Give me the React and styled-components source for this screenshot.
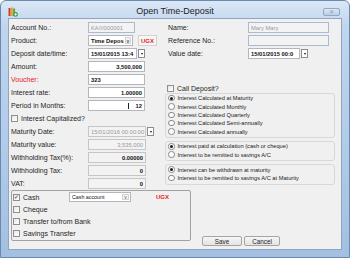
import React from "react";
import styled, { createGlobalStyle } from "styled-components";

const GlobalStyle = createGlobalStyle`
  html, body { margin: 0; padding: 0; background: #ffffff; }
  body { font-family: "Liberation Sans", Arial, sans-serif; }
  * { box-sizing: border-box; }
`;

const Window = styled.div`
  width: 350px;
  height: 258px;
  display: flex;
  flex-direction: column;
  padding: 0 7px 7px 7px;
  border: 1px solid #6a89af;
  border-radius: 6px 6px 0 0;
  background: linear-gradient(180deg, #dae7f6 0%, #c0d5ee 10%, #b2cbe9 55%, #a3bfe1 100%);
`;

const TitleBar = styled.div`
  height: 17px;
  display: grid;
  grid-template-columns: 1fr auto 1fr;
  align-items: end;
  padding-bottom: 1px;
`;

const Title = styled.div`
  font-size: 9px;
  line-height: 11px;
  color: #1c1c1c;
`;

const CloseButton = styled.div`
  justify-self: end;
  width: 17px;
  height: 8px;
  margin-right: 2px;
  margin-bottom: 1px;
  border: 1px solid #8fa8c6;
  border-radius: 2px;
  background: linear-gradient(180deg, #dbe6f2, #bccfe4);
  color: #8a9db5;
  font-size: 6px;
  line-height: 6px;
  text-align: center;
`;

const Client = styled.div`
  flex: 1;
  display: flex;
  flex-direction: column;
  background: #f0f0f0;
  border: 1px solid #8fa5c0;
  padding: 2px 6px 3px 2px;
`;

const TopSection = styled.div`
  display: grid;
  grid-template-columns: 154px 1fr;
  height: 169px;
`;

const Column = styled.div`
  display: flex;
  flex-direction: column;
`;

const FieldRow = styled.div`
  display: grid;
  grid-template-columns: ${(p) => p.$labelWidth}px auto;
  align-items: center;
  height: 13px;
  padding-left: ${(p) => p.$indent || 0}px;
`;

const Label = styled.span`
  font-size: 7px;
  color: ${(p) => (p.$red ? "#e8201f" : "#1e1e1e")};
  white-space: nowrap;
`;

const Inline = styled.div`
  display: flex;
  align-items: center;
  gap: ${(p) => p.$gap || 0}px;
`;

const TextBox = styled.div`
  width: ${(p) => p.$w}px;
  height: 11px;
  display: flex;
  align-items: center;
  justify-content: ${(p) => (p.$right ? "flex-end" : "flex-start")};
  padding: 0 2px;
  border: 1px solid ${(p) => (p.$blue ? "#a9bccf" : p.$disabled ? "#c6c6c6" : "#b4b6bb")};
  background: ${(p) => (p.$disabled ? "#f3f3f3" : "#ffffff")};
  color: ${(p) => (p.$muted ? "#9a9a9a" : "#111111")};
  font-size: 5.8px;
  font-weight: ${(p) => (p.$muted ? "normal" : "bold")};
  white-space: nowrap;
  overflow: hidden;
`;

const Caret = styled.span`
  width: 1px;
  height: 6px;
  background: #222;
  margin-right: 7px;
`;

const DropButton = styled.div`
  width: 7px;
  height: 9px;
  border: 1px solid #8c8c8c;
  background: #ffffff;
  display: flex;
  align-items: center;
  justify-content: center;
  &::after {
    content: "";
    border-left: 1.5px solid transparent;
    border-right: 1.5px solid transparent;
    border-top: 2px solid #111;
  }
`;

const SelectBox = styled.div`
  width: ${(p) => p.$w}px;
  height: ${(p) => p.$h || 11}px;
  display: flex;
  align-items: center;
  border: 1px solid #b4b6bb;
  background: #ffffff;
  font-size: ${(p) => (p.$small ? 5.3 : 5.8)}px;
  font-weight: ${(p) => (p.$small ? "normal" : "bold")};
  color: #111;
  padding-left: 2px;
  white-space: nowrap;
`;

const SelectText = styled.span`
  flex: 1;
`;

const SelectArrow = styled.span`
  width: 7px;
  align-self: stretch;
  margin: 1px;
  border: 1px solid #d4d4d4;
  background: #f4f4f4;
  font-size: 5px;
  color: #555;
  display: flex;
  align-items: center;
  justify-content: center;
`;

const CurrencyTag = styled.div`
  height: 11px;
  padding: 0 2px;
  display: flex;
  align-items: center;
  border: ${(p) => (p.$boxed ? "1px solid #d2d2d2" : "none")};
  background: ${(p) => (p.$boxed ? "#f6f6f6" : "transparent")};
  color: #e51c1c;
  font-size: 6px;
  font-weight: bold;
`;

const CheckRow = styled.label`
  display: flex;
  align-items: center;
  gap: ${(p) => p.$gap || 3}px;
  height: ${(p) => p.$h}px;
  padding-left: ${(p) => p.$indent || 0}px;
  font-size: 7px;
  color: #1e1e1e;
  white-space: nowrap;
`;

const CheckBox = styled.span`
  width: 7px;
  height: 7px;
  border: 1px solid #8e8f8f;
  background: linear-gradient(135deg, #e6e6e6, #ffffff);
  display: flex;
  align-items: center;
  justify-content: center;
  font-size: 6px;
  line-height: 6px;
  color: #333;
`;

const OptionGroup = styled.div`
  display: flex;
  flex-direction: column;
  border: 1px solid #d8d8d8;
  border-radius: 3px;
  padding: 0 0 1.5px 2px;
  margin-top: ${(p) => p.$top || 0}px;
`;

const RadioRow = styled.div`
  display: flex;
  align-items: center;
  gap: 3px;
  height: 8.35px;
  font-size: 5.7px;
  color: #222;
  white-space: nowrap;
`;

const Radio = styled.span`
  width: 6.5px;
  height: 6.5px;
  border-radius: 50%;
  border: 1px solid #8a8a8a;
  background: #fdfdfd;
  display: flex;
  align-items: center;
  justify-content: center;
  &::after {
    content: "";
    width: 3px;
    height: 3px;
    border-radius: 50%;
    background: ${(p) => (p.$on ? "#1a1a1a" : "transparent")};
  }
`;

const BottomSection = styled.div`
  flex: 1;
  display: flex;
  align-items: flex-end;
`;

const PaymentGroup = styled.div`
  width: 180px;
  height: 51px;
  margin-bottom: 5px;
  border: 1px solid #a2a2a2;
  border-radius: 2px;
  padding-left: 1px;
  display: flex;
  flex-direction: column;
`;

const PaymentRow = styled.div`
  display: flex;
  align-items: center;
  height: 12px;
`;

const ButtonBar = styled.div`
  display: flex;
  gap: 2px;
  margin-left: 11px;
`;

const Button = styled.button`
  width: ${(p) => p.$w}px;
  height: 10px;
  padding: 0;
  border: 1px solid #a5a5a5;
  border-radius: 2px;
  background: linear-gradient(180deg, #f6f6f6, #e3e3e3);
  font-family: inherit;
  font-size: 6.3px;
  color: #1e1e1e;
`;

function AppIcon() {
  return (
    <svg width="10" height="10" viewBox="0 0 10 10" style={{ alignSelf: "end" }}>
      <rect x="0.5" y="1" width="2" height="8" fill="#c9412b" />
      <rect x="2.8" y="0.5" width="2" height="8.5" fill="#e0a23a" />
      <rect x="5.1" y="1.5" width="2" height="7.5" fill="#7a9a3a" />
      <circle cx="7.6" cy="7.4" r="2.3" fill="#3aa33a" />
      <path d="M7.6 6.1v2.6M6.3 7.4h2.6" stroke="#fff" strokeWidth="0.9" />
    </svg>
  );
}

const interestCalc = [
  "Interest Calculated at Maturity",
  "Interest Calculated Monthly",
  "Interest Calculated Quarterly",
  "Interest Calculated Semi-annually",
  "Interest Calculated annually",
];

export default function App() {
  return (
    <>
      <GlobalStyle />
      <Window>
        <TitleBar>
          <AppIcon />
          <Title>Open Time-Deposit</Title>
          <CloseButton>✕</CloseButton>
        </TitleBar>
        <Client>
          <TopSection>
            <Column>
              <FieldRow $labelWidth={77}>
                <Label>Account No.:</Label>
                <TextBox $w={47} $disabled $blue $muted>KA/I/000001</TextBox>
              </FieldRow>
              <FieldRow $labelWidth={77}>
                <Label>Product:</Label>
                <Inline $gap={5}>
                  <SelectBox $w={45}>
                    <SelectText>Time Depos</SelectText>
                    <SelectArrow>v</SelectArrow>
                  </SelectBox>
                  <CurrencyTag $boxed>UGX</CurrencyTag>
                </Inline>
              </FieldRow>
              <FieldRow $labelWidth={77}>
                <Label>Deposit date/time:</Label>
                <Inline $gap={1}>
                  <TextBox $w={49}>15/01/2015 13:4</TextBox>
                  <DropButton />
                </Inline>
              </FieldRow>
              <FieldRow $labelWidth={77}>
                <Label>Amount:</Label>
                <TextBox $w={57} $right>3,500,000</TextBox>
              </FieldRow>
              <FieldRow $labelWidth={77}>
                <Label $red>Voucher:</Label>
                <TextBox $w={57}>323</TextBox>
              </FieldRow>
              <FieldRow $labelWidth={77}>
                <Label>Interest rate:</Label>
                <TextBox $w={57} $right>1.00000</TextBox>
              </FieldRow>
              <FieldRow $labelWidth={77}>
                <Label>Period in Months:</Label>
                <TextBox $w={57} $right><Caret />12</TextBox>
              </FieldRow>
              <CheckRow $h={13}>
                <CheckBox />
                Interest Capitalized?
              </CheckRow>
              <FieldRow $labelWidth={77}>
                <Label>Maturity Date:</Label>
                <Inline $gap={1}>
                  <TextBox $w={58} $disabled $muted>15/01/2016 00:00:00</TextBox>
                  <DropButton />
                </Inline>
              </FieldRow>
              <FieldRow $labelWidth={77}>
                <Label>Maturity value:</Label>
                <TextBox $w={58} $disabled $muted $right>3,535,000</TextBox>
              </FieldRow>
              <FieldRow $labelWidth={77}>
                <Label>Withholding Tax(%):</Label>
                <TextBox $w={58} $disabled $right>0.00000</TextBox>
              </FieldRow>
              <FieldRow $labelWidth={77}>
                <Label>Withholding Tax:</Label>
                <TextBox $w={58} $disabled $right>0</TextBox>
              </FieldRow>
              <FieldRow $labelWidth={77}>
                <Label>VAT:</Label>
                <TextBox $w={58} $disabled $right>0</TextBox>
              </FieldRow>
            </Column>

            <Column>
              <FieldRow $labelWidth={80} $indent={3}>
                <Label>Name:</Label>
                <TextBox $w={81} $disabled $blue $muted>Mary Mary</TextBox>
              </FieldRow>
              <FieldRow $labelWidth={80} $indent={3}>
                <Label>Reference No.:</Label>
                <TextBox $w={81} $disabled $blue />
              </FieldRow>
              <FieldRow $labelWidth={80} $indent={3}>
                <Label>Value date:</Label>
                <Inline $gap={1}>
                  <TextBox $w={52}>15/01/2015 00:0</TextBox>
                  <DropButton />
                </Inline>
              </FieldRow>
              <CheckRow $h={9} $indent={2} style={{ marginTop: 24 }}>
                <CheckBox />
                Call Deposit?
              </CheckRow>
              <OptionGroup>
                {interestCalc.map((t, i) => (
                  <RadioRow key={t}>
                    <Radio $on={i === 0} />
                    {t}
                  </RadioRow>
                ))}
              </OptionGroup>
              <OptionGroup $top={3}>
                <RadioRow>
                  <Radio $on />
                  Interest paid at calculation (cash or cheque)
                </RadioRow>
                <RadioRow>
                  <Radio />
                  Interest to be remitted to savings A/C
                </RadioRow>
              </OptionGroup>
              <OptionGroup $top={3}>
                <RadioRow>
                  <Radio $on />
                  Interest can be withdrawn at maturity
                </RadioRow>
                <RadioRow>
                  <Radio />
                  Interest to be remitted to savings A/C at Maturity
                </RadioRow>
              </OptionGroup>
            </Column>
          </TopSection>

          <BottomSection>
            <PaymentGroup>
              <PaymentRow>
                <CheckRow $h={12} style={{ width: 56 }}>
                  <CheckBox>✓</CheckBox>
                  Cash
                </CheckRow>
                <SelectBox $w={62} $h={10} $small>
                  <SelectText>Cash account</SelectText>
                  <SelectArrow>v</SelectArrow>
                </SelectBox>
                <CurrencyTag style={{ marginLeft: 23 }}>UGX</CurrencyTag>
              </PaymentRow>
              <PaymentRow>
                <CheckRow $h={12}>
                  <CheckBox />
                  Cheque
                </CheckRow>
              </PaymentRow>
              <PaymentRow>
                <CheckRow $h={12}>
                  <CheckBox />
                  Transfer to/from Bank
                </CheckRow>
              </PaymentRow>
              <PaymentRow>
                <CheckRow $h={12}>
                  <CheckBox />
                  Savings Transfer
                </CheckRow>
              </PaymentRow>
            </PaymentGroup>
            <ButtonBar>
              <Button $w={40}>Save</Button>
              <Button $w={36}>Cancel</Button>
            </ButtonBar>
          </BottomSection>
        </Client>
      </Window>
    </>
  );
}
